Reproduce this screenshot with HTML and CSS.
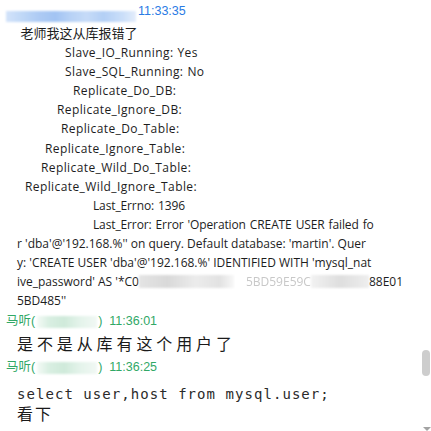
FILE: index.html
```html
<!DOCTYPE html>
<html lang="zh-CN">
<head>
    <meta charset="UTF-8">
    <title>聊天记录</title>
    <link rel="stylesheet" href="styles.css">
</head>
<body>
    <div class="chat">
        <div class="msg">
            <div class="head head-blue">
                <span class="nick-blur nick-blue"></span>
                <span class="time">11:33:35</span>
            </div>
            <div class="body"><div class="line first"> 老师我这从库报错了</div><div class="line kv">            Slave_IO_Running: Yes</div><div class="line kv">            Slave_SQL_Running: No</div><div class="line kv">              Replicate_Do_DB: </div><div class="line kv">          Replicate_Ignore_DB: </div><div class="line kv">           Replicate_Do_Table: </div><div class="line kv">       Replicate_Ignore_Table: </div><div class="line kv">      Replicate_Wild_Do_Table: </div><div class="line kv">  Replicate_Wild_Ignore_Table: </div><div class="line err">                   Last_Errno: 1396</div><div class="line err">                   Last_Error: Error 'Operation CREATE USER failed fo</div><div class="line">r 'dba'@'192.168.%'' on query. Default database: 'martin'. Quer</div><div class="line">y: 'CREATE USER 'dba'@'192.168.%' IDENTIFIED WITH 'mysql_nat</div><div class="line">ive_password' AS '*C0<span class="redact"><span class="redact-a"></span><span class="faded">5BD59E59C</span><span class="redact-b"></span></span>88E01</div><div class="line">5BD485''</div></div>
        </div>

        <div class="msg">
            <div class="head head-green">
                <span>马听(</span><span class="nick-blur nick-green"></span><span>)</span><span class="time">11:36:01</span>
            </div>
            <div class="body-big">是不是从库有这个用户了</div>
        </div>

        <div class="msg">
            <div class="head head-green">
                <span>马听(</span><span class="nick-blur nick-green"></span><span>)</span><span class="time">11:36:25</span>
            </div>
            <div class="body-code">
                <div class="code">select user,host from mysql.user;</div>
                <div class="body-big">看下</div>
            </div>
        </div>

        <div class="scroll-thumb"></div>
        <div class="scroll-arrow"></div>
    </div>
</body>
</html>
```

FILE: styles.css
```css
body {
    margin: 0;
    background-color: #fff;
    font-family: "Open Sans", "Noto Sans CJK SC", sans-serif;
}
.chat {
    position: relative;
    height: 431px;
    overflow: hidden;
}
.head {
    display: flex;
    align-items: flex-start;
    padding: 3px 0 2px 6px;
    height: 17px;
    line-height: 17px;
    font-size: 12.5px;
    font-family: "Liberation Sans", "Noto Sans CJK SC", sans-serif;
}
.head-blue {
    height: 19px;
}
.head-blue .time {
    color: #2a7be4;
    margin-left: 2px;
}
.head-green {
    color: #31a866;
}
.head-green .time {
    margin-left: 7px;
}
.nick-blur {
    display: inline-block;
    filter: blur(1px);
}
.nick-blue {
    width: 130px;
    height: 11px;
    margin-top: 8px;
    background: linear-gradient(90deg, #d3e3fa 0%, #c0d8f7 12%, #aecbf4 25%, #a2c4f3 38%, #b8d2f6 50%, #c6dbf8 62%, #b3cff5 75%, #cbdff9 90%, #e4edfb 100%);
}
.nick-green {
    width: 60px;
    height: 12px;
    margin: 3px 1px 0 2px;
    background: linear-gradient(90deg, #f4faf6 0%, #d9efe2 20%, #cfeada 45%, #e3f3ea 70%, #f1f8f4 100%);
}
.body {
    padding-left: 17px;
    font-size: 12px;
    line-height: 19.1px;
    color: #1d1d1d;
    white-space: pre;
}
.first {
    font-size: 13px;
}
.kv {
    letter-spacing: 0.4px;
    word-spacing: 0.48px;
}
.err {
    letter-spacing: -0.12px;
    word-spacing: 1px;
}
.redact {
    display: inline-flex;
    align-items: center;
    width: 230px;
    height: 14px;
    vertical-align: -2px;
}
.redact-a {
    width: 95px;
    height: 13px;
    background: linear-gradient(90deg, #e4e4e4, #d9d9d9 30%, #ececec 60%, #e2e2e2 85%, #f8f8f8);
    filter: blur(0.8px);
}
.faded {
    margin-left: 12px;
    color: #c8c8c8;
    filter: blur(0.6px);
}
.redact-b {
    flex: 1;
    height: 13px;
    background: linear-gradient(90deg, #f2f2f2, #dedede 50%, #eeeeee);
    filter: blur(0.8px);
}
.body-big {
    padding-left: 17px;
    font-size: 16px;
    line-height: 24px;
    letter-spacing: 3.9px;
    color: #1a1a1a;
}
.body-code {
    padding-top: 6px;
}
.body-code .body-big {
    line-height: 20px;
    letter-spacing: 2px;
}
.code {
    padding-left: 17px;
    font-family: "DejaVu Sans Mono", monospace;
    font-size: 14px;
    letter-spacing: 1.05px;
    line-height: 20px;
    color: #2a2a2a;
}
.scroll-thumb {
    position: absolute;
    left: 422px;
    top: 350px;
    width: 8px;
    height: 26px;
    border-radius: 4px;
    background-color: #cdcdcd;
}
.scroll-arrow {
    position: absolute;
    left: 423px;
    top: 427px;
    width: 0;
    height: 0;
    border-left: 4px solid transparent;
    border-right: 4px solid transparent;
    border-top: 4px solid #a3a3a3;
}
```
